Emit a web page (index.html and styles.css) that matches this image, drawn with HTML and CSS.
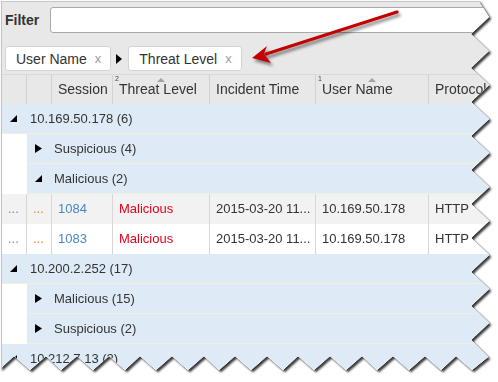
FILE: index.html
```html
<!DOCTYPE html>
<html>
<head>
<meta charset="utf-8">
<link rel="stylesheet" href="styles.css">
</head>
<body>
<div class="frame">
  <div class="torn">
    <div class="sheet">
      <div class="panel">
        <div class="toolbar">
          <div class="filter-row">
            <label class="filter-label">Filter</label>
            <input class="filter-input" type="text">
          </div>
          <div class="chip-row">
            <span class="chip">User Name<span class="chip-x">x</span></span>
            <svg class="chip-sep" width="6" height="10" viewBox="0 0 6 10"><polygon points="0,0 6,5 0,10"/></svg>
            <span class="chip">Threat Level<span class="chip-x">x</span></span>
          </div>
        </div>
        <div class="grid">
          <div class="cols hdr">
            <div class="c"></div>
            <div class="c"></div>
            <div class="c">Session</div>
            <div class="c sorted"><span class="sort-n">2</span><span class="sort-a"></span>Threat Level</div>
            <div class="c">Incident Time</div>
            <div class="c sorted"><span class="sort-n">1</span><span class="sort-a"></span>User Name</div>
            <div class="c">Protocol</div>
          </div>

          <div class="row grp"><svg class="tri" width="7" height="9" viewBox="0 0 7 9"><polygon points="0,8 7,8 7,1"/></svg><span>10.169.50.178 (6)</span></div>
          <div class="row grp sub"><svg class="tri" width="7" height="9" viewBox="0 0 7 9"><polygon points="0,0 7,4.5 0,9"/></svg><span>Suspicious (4)</span></div>
          <div class="row grp sub"><svg class="tri" width="7" height="9" viewBox="0 0 7 9"><polygon points="0,8 7,8 7,1"/></svg><span>Malicious (2)</span></div>

          <div class="cols data alt">
            <div class="c dots1">...</div>
            <div class="c dots2">...</div>
            <div class="c sess">1084</div>
            <div class="c mal">Malicious</div>
            <div class="c">2015-03-20 11...</div>
            <div class="c">10.169.50.178</div>
            <div class="c">HTTP</div>
          </div>
          <div class="cols data">
            <div class="c dots1">...</div>
            <div class="c dots2">...</div>
            <div class="c sess">1083</div>
            <div class="c mal">Malicious</div>
            <div class="c">2015-03-20 11...</div>
            <div class="c">10.169.50.178</div>
            <div class="c">HTTP</div>
          </div>

          <div class="row grp"><svg class="tri" width="7" height="9" viewBox="0 0 7 9"><polygon points="0,8 7,8 7,1"/></svg><span>10.200.2.252 (17)</span></div>
          <div class="row grp sub"><svg class="tri" width="7" height="9" viewBox="0 0 7 9"><polygon points="0,0 7,4.5 0,9"/></svg><span>Malicious (15)</span></div>
          <div class="row grp sub"><svg class="tri" width="7" height="9" viewBox="0 0 7 9"><polygon points="0,0 7,4.5 0,9"/></svg><span>Suspicious (2)</span></div>
          <div class="row grp"><svg class="tri" width="7" height="9" viewBox="0 0 7 9"><polygon points="0,8 7,8 7,1"/></svg><span>10.212.7.13 (2)</span></div>
        </div>
      </div>
    </div>
  </div>
  <svg class="arrow" width="498" height="382" viewBox="0 0 498 382">
    <line x1="397" y1="12" x2="266" y2="54" stroke="#c40000" stroke-width="3.2" stroke-linecap="round"/>
    <polygon points="252,58 267,46 264,54 271,63" fill="#c40000"/>
  </svg>
</div>
</body>
</html>
```

FILE: styles.css
```css
html, body {
  margin: 0;
  padding: 0;
  background: #fff;
}

body {
  font-family: "Liberation Sans", Arial, sans-serif;
  color: #333;
}

.frame {
  position: relative;
  width: 498px;
  height: 382px;
  overflow: hidden;
}

.torn {
  width: 498px;
  height: 382px;
  filter: drop-shadow(2px 2px 1px rgba(0, 0, 0, 0.78));
}

.sheet {
  width: 498px;
  height: 382px;
  box-sizing: border-box;
  padding: 1px 0 0 1px;
  background: #fbfbfb;
  clip-path: polygon(
    0px 0px, 478px 0px,
    489px 17px, 471px 34px, 489px 51px, 471px 68px, 489px 85px, 471px 102px,
    489px 119px, 471px 136px, 489px 153px, 471px 170px, 489px 187px, 471px 204px,
    489px 221px, 471px 238px, 489px 255px, 471px 272px, 489px 289px, 471px 306px,
    489px 323px, 471px 340px, 488px 357px,
    472px 370px, 456px 356px, 441px 370px, 425px 356px, 409px 370px, 393px 356px,
    377px 370px, 362px 356px, 346px 370px, 330px 356px, 314px 370px, 298px 356px,
    283px 370px, 267px 356px, 251px 370px, 235px 356px, 219px 370px, 204px 356px,
    188px 370px, 172px 356px, 156px 370px, 140px 356px, 125px 370px, 109px 356px,
    93px 370px, 77px 356px, 61px 370px, 46px 356px, 30px 370px, 14px 356px,
    0px 369px
  );
}

.panel {
  height: 100%;
  box-sizing: border-box;
  border-top: 1px solid #c6c6c6;
  border-left: 1px solid #c2c2c2;
  background: #e8e8e8;
  display: flex;
  flex-direction: column;
}

.toolbar {
  padding: 5px 0 3px 3px;
  border-bottom: 1px solid #d9d9d9;
}

.filter-row {
  display: flex;
  align-items: center;
  gap: 11px;
}

.filter-label {
  font-size: 14px;
  font-weight: bold;
  color: #333;
}

.filter-input {
  flex: 1;
  height: 26px;
  box-sizing: border-box;
  margin: 0;
  border: 1px solid #a9a9a9;
  border-radius: 3px;
  background: #fff;
}

.chip-row {
  display: flex;
  align-items: center;
  margin-top: 13px;
}

.chip {
  display: inline-flex;
  align-items: center;
  height: 25px;
  box-sizing: border-box;
  padding: 0 9px 0 10px;
  border: 1px solid #d4d4d4;
  border-radius: 3px;
  background: #fff;
  font-size: 14px;
  color: #333;
}

.chip-x {
  margin-left: 8px;
  font-size: 13px;
  color: #9c9c9c;
}

.chip-sep {
  margin: 0 6px 0 5px;
  fill: #000;
}

.grid {
  flex: 1;
  background: #fff;
}

.cols {
  display: grid;
  grid-template-columns: 25px 25px 61px 97px 106px 113px 1fr;
}

.c {
  box-sizing: border-box;
  border-right: 1px solid #d6d6d6;
  padding-left: 6px;
  white-space: nowrap;
  overflow: hidden;
}

.hdr {
  height: 29px;
  background: #e8e8e8;
  font-size: 14px;
  line-height: 29px;
  color: #333;
}

.hdr .c {
  border-right-color: #d2d2d2;
}

.sorted {
  position: relative;
}

.sort-n {
  position: absolute;
  left: 2px;
  top: 0;
  font-size: 7px;
  line-height: 8px;
  color: #444;
}

.sort-a {
  position: absolute;
  left: 50%;
  top: 3px;
  margin-left: -4px;
  width: 0;
  height: 0;
  border-left: 4px solid transparent;
  border-right: 4px solid transparent;
  border-bottom: 4px solid #a3a3a3;
}

.row {
  display: flex;
  align-items: center;
  height: 30px;
  box-sizing: border-box;
  font-size: 13px;
  color: #333;
}

.grp {
  background: #deebf7;
  border-bottom: 1px solid #efefdb;
  padding-left: 8px;
}

.sub {
  margin-left: 25px;
}

.tri {
  flex: none;
  fill: #000;
  margin-right: 13px;
}

.sub .tri {
  margin-right: 12px;
}

.data {
  height: 30px;
  line-height: 30px;
  font-size: 13px;
  color: #333;
  background: #fff;
}

.data.alt {
  background: #f2f2f2;
}

.dots1 {
  color: #6f8fbf;
}

.dots2 {
  color: #e58a2f;
}

.sess {
  color: #4a86c6;
}

.mal {
  color: #e3001b;
}

.arrow {
  position: absolute;
  left: 0;
  top: 0;
  pointer-events: none;
  filter: drop-shadow(2px 3px 1.5px rgba(0, 0, 0, 0.45));
}
```
